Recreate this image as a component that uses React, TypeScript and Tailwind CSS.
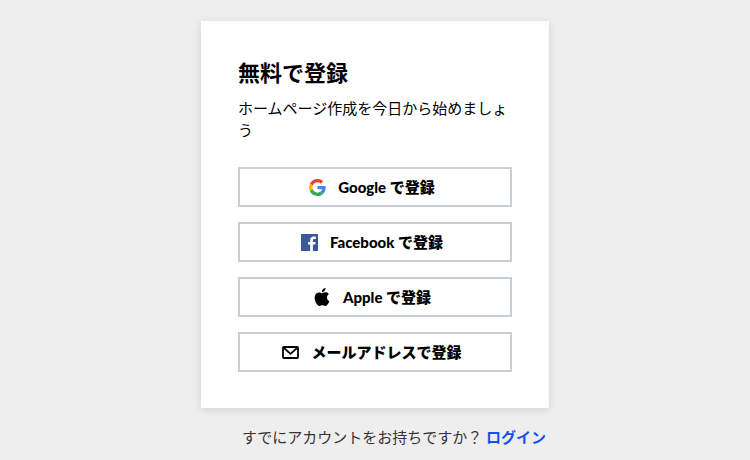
import type { ReactNode } from 'react';

function GoogleIcon() {
  return (
    <svg viewBox="0 0 48 48" className="size-[17px] shrink-0" aria-hidden="true">
      <path fill="#EA4335" d="M24 9.5c3.54 0 6.71 1.22 9.21 3.6l6.85-6.85C35.9 2.38 30.47 0 24 0 14.62 0 6.51 5.38 2.56 13.22l7.98 6.19C12.43 13.72 17.74 9.5 24 9.5z" />
      <path fill="#4285F4" d="M46.98 24.55c0-1.57-.15-3.09-.38-4.55H24v9.02h12.94c-.58 2.96-2.26 5.48-4.78 7.18l7.73 6c4.51-4.18 7.09-10.36 7.09-17.65z" />
      <path fill="#FBBC05" d="M10.53 28.59c-.48-1.45-.76-2.99-.76-4.59s.27-3.14.76-4.59l-7.98-6.19C.92 16.46 0 20.12 0 24c0 3.88.92 7.54 2.56 10.78l7.97-6.19z" />
      <path fill="#34A853" d="M24 48c6.48 0 11.93-2.13 15.89-5.81l-7.73-6c-2.15 1.45-4.92 2.3-8.16 2.3-6.26 0-11.57-4.22-13.47-9.91l-7.98 6.19C6.51 42.62 14.62 48 24 48z" />
    </svg>
  );
}

function FacebookIcon() {
  return (
    <svg viewBox="0 0 17 17" className="size-[17px] shrink-0" aria-hidden="true">
      <rect width="17" height="17" fill="#3b5998" />
      <path fill="#fff" d="M9.2 17v-6.500H7V8h2.200V6.100C9.200 3.800 10.600 2.600 12.700 2.600c1 0 1.800.1 2.100.1v2.400h-1.400c-1.200 0-1.500.6-1.500 1.400V8h2.700l-.4 2.500h-2.300V17z" />
    </svg>
  );
}

function AppleIcon() {
  return (
    <svg viewBox="0 0 24 24" className="size-[18px] shrink-0" fill="#000" aria-hidden="true">
      <path d="M12.152 6.896c-.948 0-2.415-1.078-3.960-1.040-2.040.027-3.910 1.183-4.961 3.014-2.117 3.675-.546 9.103 1.519 12.090 1.013 1.454 2.208 3.090 3.792 3.039 1.520-.065 2.090-.987 3.935-.987 1.831 0 2.350.987 3.960.948 1.637-.026 2.676-1.480 3.676-2.948 1.156-1.688 1.636-3.325 1.662-3.415-.039-.013-3.182-1.221-3.220-4.857-.026-3.040 2.480-4.494 2.597-4.559-1.429-2.090-3.623-2.324-4.390-2.376-2-.156-3.675 1.090-4.610 1.090zM15.530 3.830c.843-1.012 1.400-2.427 1.245-3.830-1.207.052-2.662.805-3.532 1.818-.780.896-1.454 2.338-1.273 3.714 1.338.104 2.715-.688 3.559-1.701" />
    </svg>
  );
}

function MailIcon() {
  return (
    <svg viewBox="0 0 17 13" className="h-[13px] w-[17px] shrink-0" fill="none" stroke="#000" strokeWidth="1.8" strokeLinejoin="round" aria-hidden="true">
      <rect x="1" y="1" width="15" height="11" rx="0.8" />
      <path d="M2 2l6.500 5.800L15 2" />
    </svg>
  );
}

const providers: { label: string; icon: ReactNode }[] = [
  { label: 'Google で登録', icon: <GoogleIcon /> },
  { label: 'Facebook で登録', icon: <FacebookIcon /> },
  { label: 'Apple で登録', icon: <AppleIcon /> },
  { label: 'メールアドレスで登録', icon: <MailIcon /> },
];

export default function App() {
  return (
    <div className="min-h-screen bg-[#eeeeee] px-4 pt-[21px] font-['Lato','Noto_Sans_CJK_JP',sans-serif] text-[15px] text-black">
      <div className="mx-auto max-w-[348px]">
        <main className="bg-white px-[37px] py-9 shadow-[0_2px_8px_rgba(0,0,0,0.12)]">
          <h1 className="text-[22px] leading-8 font-bold">無料で登録</h1>
          <p className="mt-2 leading-[22px]">ホームページ作成を今日から始めましょう</p>

          <div className="mt-[26px] flex flex-col gap-[15px]">
            {providers.map(({ label, icon }) => (
              <button
                key={label}
                type="button"
                className="flex h-10 w-full items-center justify-center gap-3 border-2 border-[#c9d0d3] pr-1.5 font-black"
              >
                {icon}
                <span>{label}</span>
              </button>
            ))}
          </div>
        </main>

        <p className="mt-[17px] pr-[3px] text-right leading-6 text-[#333333]">
          すでにアカウントをお持ちですか？{' '}
          <a href="#login" className="font-bold text-[#1650f0]">
            ログイン
          </a>
        </p>
      </div>
    </div>
  );
}
